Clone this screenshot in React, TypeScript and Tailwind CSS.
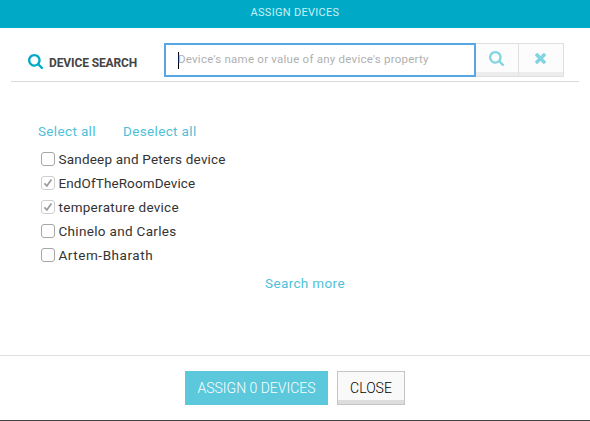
import type { ReactNode } from "react";

const devices = [
  { name: "Sandeep and Peters device", checked: false, tracking: "tracking-[0.2px]" },
  { name: "EndOfTheRoomDevice", checked: true, tracking: "tracking-[0.1px]" },
  { name: "temperature device", checked: true, tracking: "tracking-[0.28px]" },
  { name: "Chinelo and Carles", checked: false, tracking: "tracking-[0.32px]" },
  { name: "Artem-Bharath", checked: false, tracking: "tracking-[0.55px]" },
];

function SearchIcon() {
  return (
    <svg className="block h-[15px] w-[15px] shrink-0" viewBox="64 128 1664 1664" fill="currentColor">
      <path d="M1216 832q0-185-131.5-316.5t-316.5-131.5-316.5 131.5-131.5 316.5 131.5 316.5 316.5 131.5 316.5-131.5 131.5-316.5zm512 832q0 52-38 90t-90 38q-54 0-90-38l-343-342q-179 124-399 124-143 0-273.5-55.5t-225-150-150-225-55.5-273.5 55.5-273.5 150-225 225-150 273.5-55.5 273.5 55.5 225 150 150 225 55.5 273.5q0 220-124 399l343 343q37 37 37 90z" />
    </svg>
  );
}

function ClearIcon() {
  return (
    <svg className="block h-[11px] w-[11px]" viewBox="302 366 1188 1188" fill="currentColor">
      <path d="M1490 1322q0 40-28 68l-136 136q-28 28-68 28t-68-28l-294-294-294 294q-28 28-68 28t-68-28l-136-136q-28-28-28-68t28-68l294-294-294-294q-28-28-28-68t28-68l136-136q28-28 68-28t68 28l294 294 294-294q28-28 68-28t68 28l136 136q28 28 28 68t-28 68l-294 294 294 294q28 28 28 68z" />
    </svg>
  );
}

function IconButton({ children, className }: { children: ReactNode; className: string }) {
  return (
    <button className={`flex h-[34px] justify-center border-y border-r border-[#e0e0e0] bg-[#fcfcfc] text-[#80d5e1] shadow-[inset_0_-4px_0_#ececec] ${className}`}>
      {children}
    </button>
  );
}

function Checkbox({ checked }: { checked: boolean }) {
  return (
    <span className={`flex h-[14px] w-[14px] items-center justify-center rounded-[3px] border bg-white ${checked ? "border-[#cfcfcf]" : "border-[#a6a6a6]"}`}>
      {checked && (
        <svg className="h-3 w-3 shrink-0" viewBox="0 0 12 12" fill="none" stroke="#999999" strokeWidth="1.7">
          <path d="M2.4 6.4 4.9 9 9.4 2.5" />
        </svg>
      )}
    </span>
  );
}

export default function App() {
  return (
    <div className="flex h-[421px] w-[590px] flex-col border-b border-[#444444] bg-white font-[Roboto,sans-serif] text-[#333333]">
      <header className="flex h-7 items-center justify-center bg-[#00aac6] pb-[3px] text-[11px] leading-4 tracking-[0.3px] text-[#c9f0f6]">
        ASSIGN DEVICES
      </header>

      <div className="mx-[11px] flex h-[54px] border-b border-[#d9d9d9] pt-[15px]">
        <div className="flex w-[153px] items-start pl-[17px] pt-[11px] text-[#00aac6]">
          <SearchIcon />
          <h2 className="ml-[6px] mt-px whitespace-nowrap text-xs font-bold leading-[17px] tracking-[-0.12px] text-[#444444]">DEVICE SEARCH</h2>
        </div>
        <div className="flex h-[34px] w-[312px] border-2 border-[#56a7e2] bg-white pl-3 pt-[7px]">
          <span className="h-[17px] w-px bg-black" />
          <span className="-ml-px whitespace-nowrap text-[11.5px] leading-[15px] tracking-[0.24px] text-[#b0b0b0]">Device's name or value of any device's property</span>
        </div>
        <IconButton className="w-[43px] pr-px pt-[7px]"><SearchIcon /></IconButton>
        <IconButton className="w-[45px] pr-px pt-[9px]"><ClearIcon /></IconButton>
      </div>

      <main className="flex h-[273px] flex-col pt-[41px] text-[13.5px]">
        <nav className="flex h-[17px] pl-[38px] leading-[17px] text-[#4fc0d9]">
          <a className="w-[85px] tracking-[0.35px]">Select all</a>
          <a className="tracking-[0.35px]">Deselect all</a>
        </nav>
        <ul className="mt-[7px] pl-[41px]">
          {devices.map((device) => (
            <li key={device.name} className="flex h-6 items-center gap-[3.5px]">
              <Checkbox checked={device.checked} />
              <span className={`whitespace-nowrap leading-4 ${device.tracking}`}>{device.name}</span>
            </li>
          ))}
        </ul>
        <a className="mt-[7px] pl-5 text-center leading-[18px] tracking-[0.35px] text-[#4fc0d9]">Search more</a>
      </main>

      <footer className="flex h-[65px] justify-center gap-[9px] border-t border-[#e0e0e0] pt-[15px] text-sm font-light">
        <button className="flex h-[34px] w-[143px] items-center justify-center whitespace-nowrap bg-[#5bc8dc] pb-px text-white">ASSIGN 0 DEVICES</button>
        <button className="flex h-[34px] w-[68px] items-center justify-center border border-[#c4c4c4] bg-[#f9f9f9] pb-px text-black shadow-[inset_0_-4px_0_#dddddd]">CLOSE</button>
      </footer>
    </div>
  );
}
